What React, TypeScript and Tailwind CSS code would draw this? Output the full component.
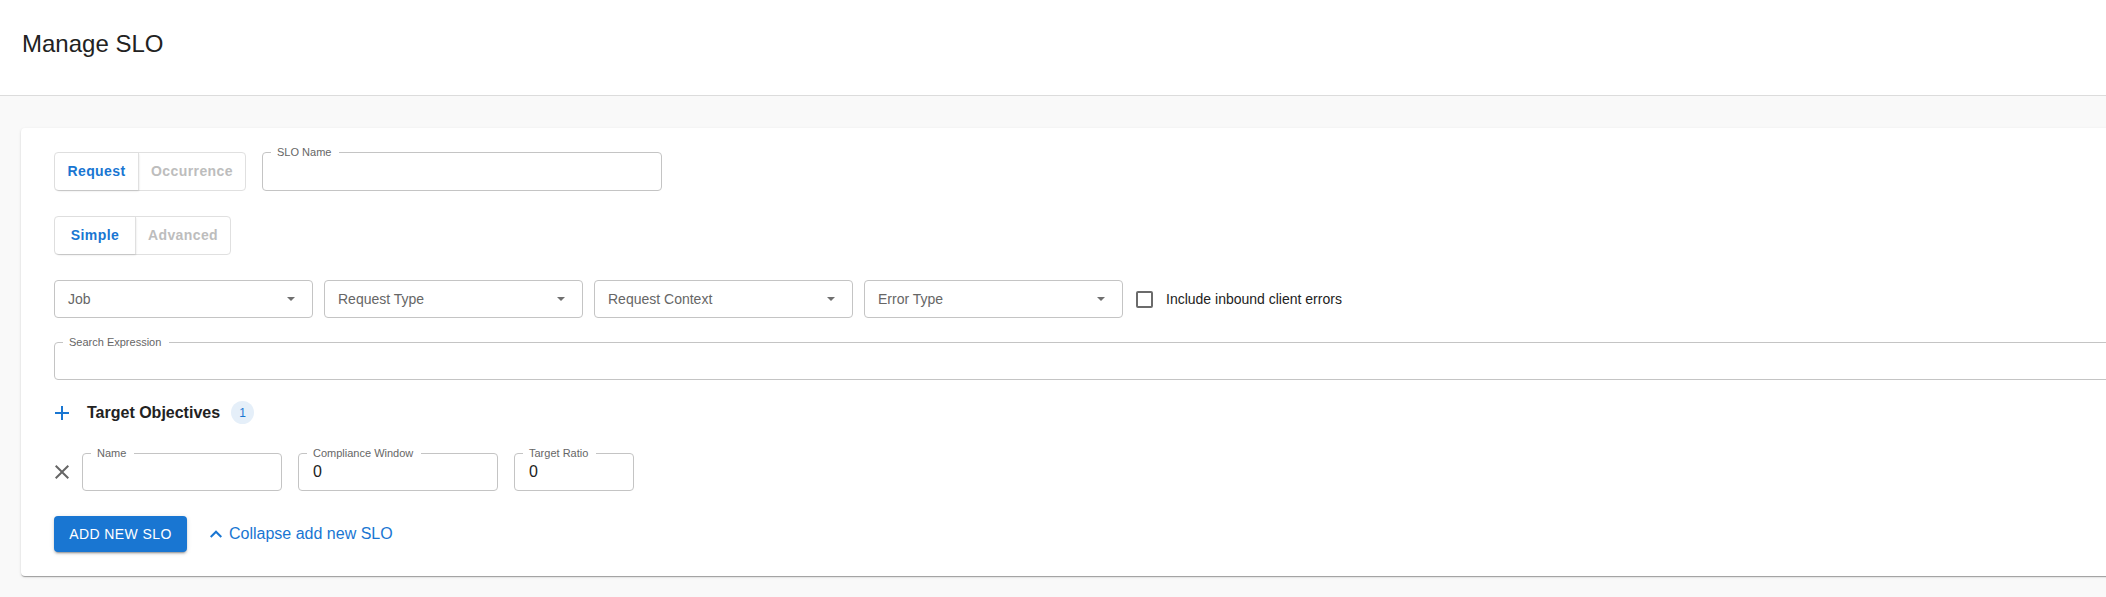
import React from "react";

function Notched({ label, width, value }: { label: string; width: string; value?: string }) {
  return (
    <div className={`relative h-[38px] rounded-[4px] border border-[#c4c4c4] bg-white ${width}`}>
      <span className="absolute left-[8px] top-[-7px] bg-white pl-[6px] pr-[8px] text-[11px] leading-[13px] text-[#666]">
        {label}
      </span>
      {value !== undefined && (
        <div className="flex h-full items-center pl-[14px] text-[16px] text-[#222]">{value}</div>
      )}
    </div>
  );
}

function Select({ label }: { label: string }) {
  return (
    <div className="flex h-[38px] w-[259px] items-center justify-between rounded-[4px] border border-[#c4c4c4] bg-white pl-[13px] pr-[17px]">
      <span className="text-[14px] text-[#666]">{label}</span>
      <svg width="8" height="4" viewBox="0 0 8 4">
        <path d="M0 0 L8 0 L4 4 Z" fill="#6f6f6f" />
      </svg>
    </div>
  );
}

function Toggle({ a, b, wa, wb }: { a: string; b: string; wa: string; wb: string }) {
  return (
    <div className="flex h-[39px] rounded-[4px] border border-[#e0e0e0] bg-white">
      <div
        className={`flex items-center justify-center rounded-l-[4px] text-[14px] font-bold tracking-[0.4px] text-[#1976d2] shadow-[1px_1px_2px_rgba(0,0,0,0.15)] ${wa}`}
      >
        {a}
      </div>
      <div
        className={`flex items-center justify-center border-l border-[#e0e0e0] text-[14px] font-bold tracking-[0.4px] text-[#bdbdbd] ${wb}`}
      >
        {b}
      </div>
    </div>
  );
}

export default function App() {
  return (
    <div className="min-h-screen w-full overflow-hidden bg-[#f9f9f9] font-['Liberation_Sans',Arial,sans-serif]">
      <div className="h-[96px] border-b border-[#dcdcdc] bg-white pl-[22px] pt-[30px]">
        <div className="text-[24px] leading-[28px] text-[#222]">Manage SLO</div>
      </div>
      <div className="ml-[21px] mt-[32px] w-[2300px] rounded-[4px] bg-white pl-[33px] pr-[33px] pt-[24px] pb-[24px] shadow-[0_2px_1px_-1px_rgba(0,0,0,0.2),0_1px_1px_0_rgba(0,0,0,0.14),0_1px_3px_0_rgba(0,0,0,0.12)]">
        {/* row 1 */}
        <div className="flex h-[39px] items-start gap-[16px]">
          <Toggle a="Request" b="Occurrence" wa="w-[83px]" wb="w-[107px]" />
          <div className="relative h-[39px] w-[400px] rounded-[4px] border border-[#c4c4c4] bg-white">
            <span className="absolute left-[8px] top-[-7px] bg-white pl-[6px] pr-[8px] text-[11px] leading-[13px] text-[#666]">
              SLO Name
            </span>
          </div>
        </div>
        {/* row 2 */}
        <div className="mt-[25px] flex h-[39px]">
          <Toggle a="Simple" b="Advanced" wa="w-[80px]" wb="w-[95px]" />
        </div>
        {/* row 3 */}
        <div className="mt-[25px] flex h-[38px] items-center gap-[11px]">
          <Select label="Job" />
          <Select label="Request Type" />
          <Select label="Request Context" />
          <Select label="Error Type" />
          <div className="ml-[2px] flex items-center">
            <div className="h-[17px] w-[17px] rounded-[2px] border-2 border-[#6b6b6b]" />
            <span className="ml-[13px] text-[14px] text-[#222]">Include inbound client errors</span>
          </div>
        </div>
        {/* row 4 */}
        <div className="mt-[24px]">
          <Notched label="Search Expression" width="w-full" />
        </div>
        {/* row 5 */}
        <div className="mt-[21px] flex h-[23px] items-center">
          <svg width="14" height="14" viewBox="5 5 14 14" className="ml-[1px]">
            <path d="M19 13h-6v6h-2v-6H5v-2h6V5h2v6h6v2z" fill="#1976d2" />
          </svg>
          <span className="ml-[18px] text-[16px] font-bold text-[#222]">Target Objectives</span>
          <span className="ml-[11px] flex h-[23px] w-[23px] items-center justify-center rounded-full bg-[#e5eff9] text-[12px] text-[#1976d2]">
            1
          </span>
        </div>
        {/* row 6 */}
        <div className="mt-[29px] flex h-[38px] items-center">
          <svg width="14" height="14" viewBox="5 5 14 14" className="ml-[1px]">
            <path
              d="M19 6.41 17.59 5 12 10.59 6.41 5 5 6.41 10.59 12 5 17.59 6.41 19 12 13.41 17.59 19 19 17.59 13.41 12z"
              fill="#666"
            />
          </svg>
          <div className="ml-[13px] flex gap-[16px]">
            <Notched label="Name" width="w-[200px]" />
            <Notched label="Compliance Window" width="w-[200px]" value="0" />
            <Notched label="Target Ratio" width="w-[120px]" value="0" />
          </div>
        </div>
        {/* row 7 */}
        <div className="mt-[25px] flex h-[36px] items-center">
          <button className="flex h-[36px] w-[133px] items-center justify-center rounded-[4px] bg-[#1976d2] text-[14px] tracking-[0.4px] text-white shadow-[0_3px_1px_-2px_rgba(0,0,0,0.2),0_2px_2px_0_rgba(0,0,0,0.14),0_1px_5px_0_rgba(0,0,0,0.12)]">
            ADD NEW SLO
          </button>
          <div className="ml-[23px] flex items-center text-[#1976d2]">
            <svg width="12" height="8" viewBox="6 8 12 7.41">
              <path d="m12 8-6 6 1.41 1.41L12 10.83l4.59 4.58L18 14z" fill="#1976d2" />
            </svg>
            <span className="ml-[7px] text-[16px]">Collapse add new SLO</span>
          </div>
        </div>
      </div>
    </div>
  );
}
